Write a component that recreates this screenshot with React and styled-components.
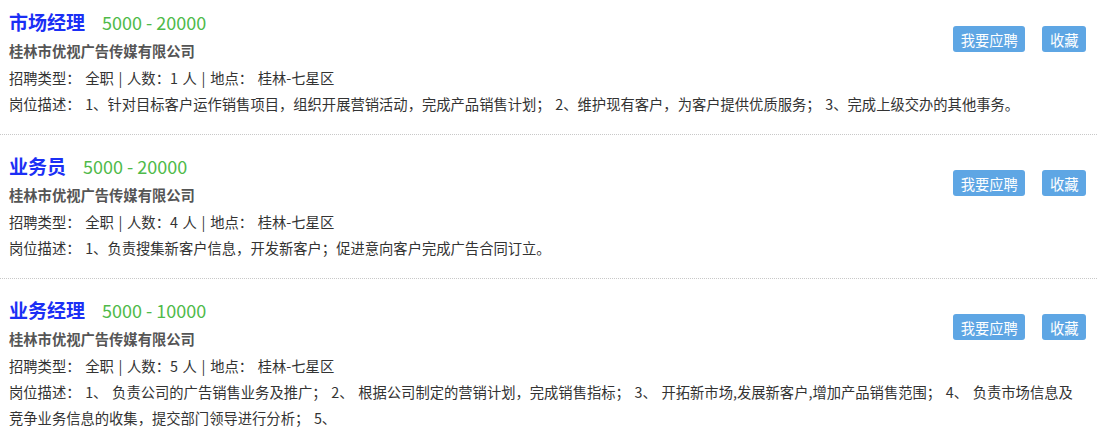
import React from 'react';
import styled, { createGlobalStyle } from 'styled-components';

const GlobalStyle = createGlobalStyle`
  body {
    margin: 0;
    background: #fff;
    font-family: "Noto Sans CJK SC", "Microsoft YaHei", sans-serif;
    color: #333;
  }
`;

const List = styled.div`
  display: flex;
  flex-direction: column;
`;

const Item = styled.div`
  padding: 16px 11px 17px 9px;
  border-bottom: 1px dotted #c8c8c8;

  &:first-child {
    padding-top: 7px;
  }
`;

const Top = styled.div`
  display: flex;
  justify-content: space-between;
  align-items: flex-start;
`;

const Main = styled.div``;

const TitleRow = styled.div`
  display: flex;
  align-items: baseline;
  line-height: 30px;
`;

const Title = styled.span`
  font-size: 19px;
  font-weight: bold;
  color: #1b2ff5;
`;

const Salary = styled.span`
  margin-left: 17px;
  font-size: 18px;
  color: #4fba4a;
`;

const Company = styled.div`
  font-size: 14.3px;
  font-weight: bold;
  color: #555;
  line-height: 27px;
`;

const Row = styled.div`
  font-size: 14.3px;
  line-height: ${(p) => (p.$desc ? '26px' : '27px')};
  word-spacing: 1.5px;
  color: #333;
`;

const Actions = styled.div`
  display: flex;
  gap: 17px;
  margin-top: 19px;
`;

const Button = styled.button`
  height: 26px;
  padding: 0 7.5px;
  border: none;
  border-radius: 3px;
  background: #5ea6e4;
  color: #fff;
  font-family: inherit;
  font-size: 14.3px;
  cursor: pointer;
`;

const jobs = [
  {
    title: '市场经理',
    salary: '5000 - 20000',
    count: 1,
    desc: '1、针对目标客户运作销售项目，组织开展营销活动，完成产品销售计划； 2、维护现有客户，为客户提供优质服务； 3、完成上级交办的其他事务。',
  },
  {
    title: '业务员',
    salary: '5000 - 20000',
    count: 4,
    desc: '1、负责搜集新客户信息，开发新客户；促进意向客户完成广告合同订立。',
  },
  {
    title: '业务经理',
    salary: '5000 - 10000',
    count: 5,
    desc: '1、 负责公司的广告销售业务及推广； 2、 根据公司制定的营销计划，完成销售指标； 3、 开拓新市场,发展新客户,增加产品销售范围； 4、 负责市场信息及竞争业务信息的收集，提交部门领导进行分析； 5、',
  },
];

const App = () => {
  return (
    <>
      <GlobalStyle />
      <List>
        {jobs.map((job) => (
          <Item key={job.title}>
            <Top>
              <Main>
                <TitleRow>
                  <Title>{job.title}</Title>
                  <Salary>{job.salary}</Salary>
                </TitleRow>
                <Company>桂林市优视广告传媒有限公司</Company>
                <Row>招聘类型： 全职 | 人数：{job.count} 人 | 地点： 桂林-七星区</Row>
              </Main>
              <Actions>
                <Button>我要应聘</Button>
                <Button>收藏</Button>
              </Actions>
            </Top>
            <Row $desc>岗位描述： {job.desc}</Row>
          </Item>
        ))}
      </List>
    </>
  );
};

export default App;
